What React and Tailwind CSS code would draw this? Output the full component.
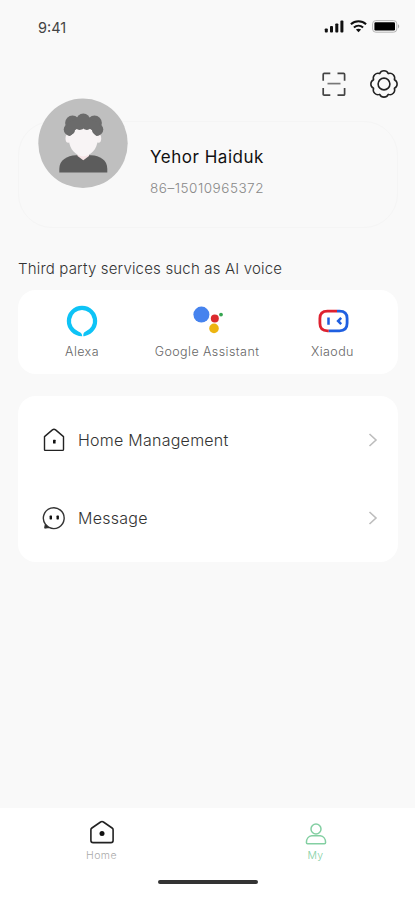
function SignalIcon() {
  return (
    <svg width="20" height="13" viewBox="0 0 20 13" fill="#111">
      <rect x="0.8" y="8.4" width="3" height="4" rx="0.9" />
      <rect x="6" y="6" width="3" height="6.4" rx="0.9" />
      <rect x="11.3" y="3.4" width="3" height="9" rx="0.9" />
      <rect x="16.4" y="0.6" width="3" height="11.8" rx="0.9" />
    </svg>
  );
}

function WifiIcon() {
  return (
    <svg width="17" height="13" viewBox="0 0 17 13" fill="none" stroke="#111" strokeWidth="2">
      <path d="M0.9 4.3C5.2 0.3 11.8 0.3 16.1 4.3" />
      <path d="M3.9 7.6C6.6 5.2 10.4 5.2 13.1 7.6" />
      <path d="M5.9 9.6C7.4 8.4 9.6 8.4 11.1 9.6L8.5 12.3Z" fill="#111" stroke="none" />
    </svg>
  );
}

function BatteryIcon() {
  return (
    <svg width="28" height="13" viewBox="0 0 28 13">
      <rect x="0.6" y="0.6" width="24.2" height="11.6" rx="3.2" fill="none" stroke="#b5b5b5" />
      <rect x="2.4" y="2.3" width="20.6" height="8.2" rx="1.2" fill="#000" />
      <path d="M26 4.3C27.6 5 27.6 7.8 26 8.5Z" fill="#aaa" />
    </svg>
  );
}

function ScanIcon() {
  return (
    <svg width="24" height="25" viewBox="0 0 24 25" fill="none" stroke="#444" strokeWidth="1.7">
      <path d="M1.2 8.8V2.4Q1.2 1.4 2.2 1.4H8.3M15.5 1.4H21.6Q22.6 1.4 22.6 2.4V8.8M22.6 16V22.2Q22.6 23.2 21.6 23.2H15.5M8.3 23.2H2.2Q1.2 23.2 1.2 22.2V16" />
      <path d="M5.5 11.6H18.5" stroke="#777" />
    </svg>
  );
}

function GearIcon() {
  return (
    <svg width="28" height="28" viewBox="0 0 28 28" fill="none" stroke="#222" strokeWidth="1.6" strokeLinejoin="round">
      <path d="M9.56 3.28A4.9 4.9 0 0 1 18.44 3.28A4.9 4.9 0 0 1 24.72 9.56A4.9 4.9 0 0 1 24.72 18.44A4.9 4.9 0 0 1 18.44 24.72A4.9 4.9 0 0 1 9.56 24.72A4.9 4.9 0 0 1 3.28 18.44A4.9 4.9 0 0 1 3.28 9.56A4.9 4.9 0 0 1 9.56 3.28Z" transform="translate(0.4 0.4) scale(0.97)" />
      <circle cx="14" cy="14" r="5.9" />
    </svg>
  );
}

function Avatar() {
  return (
    <svg width="90" height="90" viewBox="0 0 90 90">
      <circle cx="45" cy="45.3" r="44.7" fill="#bfbfbf" />
      <path d="M21.3 74.5V71C21.3 62 29 57.8 38 57.3H53C62 57.8 69.3 62 69.3 71V74.5Z" fill="#5c5c5c" />
      <path d="M39.5 54H51V58L45.3 62.3L39.5 58Z" fill="#f6e4e6" />
      <ellipse cx="30.3" cy="40.5" rx="2.8" ry="4.2" fill="#f7f2f3" />
      <ellipse cx="60.4" cy="40.5" rx="2.8" ry="4.2" fill="#f7f2f3" />
      <path d="M31 30H59.6V42C59.6 51 52 58.4 45.3 58.4C38.4 58.4 31 51 31 42Z" fill="#f8f4f5" />
      <g fill="#6b6b6b">
        <circle cx="45.3" cy="22.3" r="6.9" />
        <circle cx="34.5" cy="25" r="7.4" />
        <circle cx="56.5" cy="25" r="7.4" />
        <circle cx="31.4" cy="31.5" r="5.7" />
        <circle cx="59.6" cy="31.5" r="5.7" />
        <path d="M27 34C28 36.5 30 38 32 38C35 36.5 35.5 32 37.5 29.5C39 32 42.5 33 45.5 30.5C48 33 51.5 32 53 29.5C55 32 55.5 36.5 58.5 38C61 38 63 36.5 64 34L61 25L50 20H40L30 25Z" />
      </g>
    </svg>
  );
}

function AlexaIcon() {
  return (
    <svg width="32" height="32" viewBox="0 0 32 32">
      <path fillRule="evenodd" fill="#0ec3f6" d="M16 0.8A15.2 15.2 0 1 1 16 31.2A15.2 15.2 0 1 1 16 0.8ZM16 5A11 11 0 0 0 12.4 26.4C14.6 27.2 15.9 28 16.3 31.2H17.3C17.2 28.6 17.6 27.1 19.6 26.4A11 11 0 0 0 16 5Z" />
    </svg>
  );
}

function AssistantIcon() {
  return (
    <svg width="32" height="32" viewBox="0 0 32 32">
      <circle cx="10.4" cy="9.6" r="8" fill="#4683ee" />
      <circle cx="23.8" cy="13.6" r="4" fill="#dc2b2e" />
      <circle cx="30" cy="9.6" r="1.9" fill="#35a550" />
      <circle cx="23" cy="23.4" r="4.8" fill="#edb511" />
    </svg>
  );
}

function XiaoduIcon() {
  return (
    <svg width="32" height="32" viewBox="0 0 32 32" fill="none" strokeWidth="2.8">
      <path d="M11.8 25.8H10.5C5 25.8 2.9 23 2.9 18.3V13.5C2.9 8.7 5 6.2 10.5 6.2H20" stroke="#de2230" />
      <path d="M20 6.2H22.5C28 6.2 30.1 8.7 30.1 13.5V18.3C30.1 23 28 25.8 22.5 25.8H11.8" stroke="#1f5fe0" />
      <path d="M11.5 12.4V19.7M24.2 12.9L21.1 16L24.2 19.1" stroke="#1f5fe0" strokeWidth="2.5" />
    </svg>
  );
}

function HouseIcon() {
  return (
    <svg width="22" height="24" viewBox="0 0 22 24" fill="none" stroke="#222" strokeWidth="1.4" strokeLinejoin="round">
      <path d="M1.5 8.6L9.4 1.9Q11 0.7 12.6 1.9L20.5 8.6V21.4Q20.5 22.4 19.5 22.4H2.5Q1.5 22.4 1.5 21.4Z" />
      <rect x="10" y="11.8" width="2.6" height="3.6" rx="0.5" fill="#111" stroke="none" />
    </svg>
  );
}

function MessageIcon() {
  return (
    <svg width="24" height="24" viewBox="0 0 24 24" fill="none" stroke="#333" strokeWidth="1.4" strokeLinejoin="round">
      <path d="M3.6 18.6A10.4 10.4 0 1 1 7 21.4L3.2 21.6Z" />
      <path d="M3.6 18.6L3 21.8L6.4 21Z" fill="#111" />
      <rect x="7.6" y="9.6" width="2.4" height="3.8" rx="0.6" fill="#111" stroke="none" />
      <rect x="14.5" y="9.6" width="2.4" height="3.8" rx="0.6" fill="#111" stroke="none" />
    </svg>
  );
}

function Chevron() {
  return (
    <svg width="10" height="14" viewBox="0 0 10 14" fill="none" stroke="#bdbdbd" strokeWidth="1.6">
      <path d="M1.5 1L8 7L1.5 13" />
    </svg>
  );
}

function HomeTabIcon() {
  return (
    <svg width="26" height="26" viewBox="0 0 26 26" fill="none" stroke="#222" strokeWidth="1.6" strokeLinejoin="round">
      <path d="M1.9 9.8Q1.9 8.7 2.9 8L11.6 2Q13 1.1 14.4 2L23.1 8Q24.1 8.7 24.1 9.8V20.4Q24.1 22.6 21.9 22.6H4.1Q1.9 22.6 1.9 20.4Z" />
      <circle cx="13" cy="13.6" r="2.5" fill="#111" stroke="none" />
    </svg>
  );
}

function UserTabIcon() {
  return (
    <svg width="22" height="24" viewBox="0 0 22 24" fill="none" stroke="#83cfa2" strokeWidth="1.5" strokeLinejoin="round">
      <circle cx="11" cy="7" r="5" />
      <path d="M6.8 13.8H15.2C18.5 14.1 20.6 17 20.6 20.6Q20.6 21.8 19.4 21.8H2.6Q1.4 21.8 1.4 20.6C1.4 17 3.5 14.1 6.8 13.8Z" />
    </svg>
  );
}

function Service({ icon, label, width, tracking }) {
  return (
    <div className={`flex flex-col items-center ${width}`}>
      {icon}
      <span className={`mt-[5px] text-[12.5px] leading-[20px] font-light whitespace-nowrap text-[#666] ${tracking}`}>{label}</span>
    </div>
  );
}

function MenuRow({ icon, label, tracking }) {
  return (
    <div className="flex h-[78px] items-center pr-5 pl-6">
      <span className="flex w-6 justify-center">{icon}</span>
      <span className={`ml-3 flex-1 text-[16px] font-light text-[#333] ${tracking}`}>{label}</span>
      <Chevron />
    </div>
  );
}

export default function App() {
  return (
    <div className="flex h-[900px] w-[415px] flex-col overflow-hidden bg-[#f9f9f9] font-['Inter','Liberation_Sans',sans-serif]">
      <header className="flex h-[54px] shrink-0 items-center justify-between pr-[15px] pl-[38px]">
        <span className="pt-px text-[14.5px] text-[#444]">9:41</span>
        <div className="flex items-center gap-[6px] pb-[2px]">
          <SignalIcon />
          <WifiIcon />
          <div className="-ml-px"><BatteryIcon /></div>
        </div>
      </header>

      <div className="flex h-[67px] shrink-0 items-start justify-end gap-[24px] pt-4 pr-[17px]">
        <div className="pt-[2px]"><ScanIcon /></div>
        <GearIcon />
      </div>

      <section className="relative mr-[17px] ml-[18px] h-[107px] shrink-0 rounded-[34px] border border-[#f5f5f5] pt-[24px] pl-[131px]">
        <div className="absolute -top-[24px] left-[19px]"><Avatar /></div>
        <h1 className="text-[17px] leading-[22px] tracking-[0.52px] text-[#111]">Yehor Haiduk</h1>
        <p className="mt-[10px] text-[13.5px] leading-[20px] font-light tracking-[0.52px] text-[#888]">86–15010965372</p>
      </section>

      <h2 className="mt-[30px] ml-[18px] h-[32px] shrink-0 text-[15px] leading-[21px] font-light tracking-[0.18px] text-[#333]">
        Third party services such as AI voice
      </h2>

      <section className="mr-[17px] ml-[18px] flex h-[84px] shrink-0 rounded-[18px] bg-white pt-[15px]">
        <Service icon={<AlexaIcon />} label="Alexa" width="w-[128px]" tracking="tracking-[0.4px]" />
        <Service icon={<AssistantIcon />} label="Google Assistant" width="w-[122px]" tracking="tracking-[0.43px]" />
        <Service icon={<XiaoduIcon />} label="Xiaodu" width="w-[129px]" tracking="tracking-[0.4px]" />
      </section>

      <section className="mt-[22px] mr-[17px] ml-[18px] h-[166px] shrink-0 rounded-[18px] bg-white pt-[5px]">
        <MenuRow icon={<HouseIcon />} label="Home Management" tracking="tracking-[0.25px]" />
        <MenuRow icon={<MessageIcon />} label="Message" tracking="tracking-[0.25px]" />
      </section>

      <footer className="mt-auto flex h-[92px] shrink-0 flex-col items-center bg-white">
        <nav className="flex h-[72px] w-full">
          <div className="flex w-[203px] flex-col items-center pt-3">
            <HomeTabIcon />
            <span className="mt-[2px] text-[10.5px] leading-4 font-light tracking-[0.4px] text-[#aaa]">Home</span>
          </div>
          <div className="flex w-[212px] flex-col items-center pt-[14px] pl-[13px]">
            <UserTabIcon />
            <span className="mt-[2px] text-[10.5px] leading-4 font-light tracking-[0.3px] text-[#83cfa2]">My</span>
          </div>
        </nav>
        <div className="h-1 w-[100px] rounded-full bg-[#333]" />
      </footer>
    </div>
  );
}
